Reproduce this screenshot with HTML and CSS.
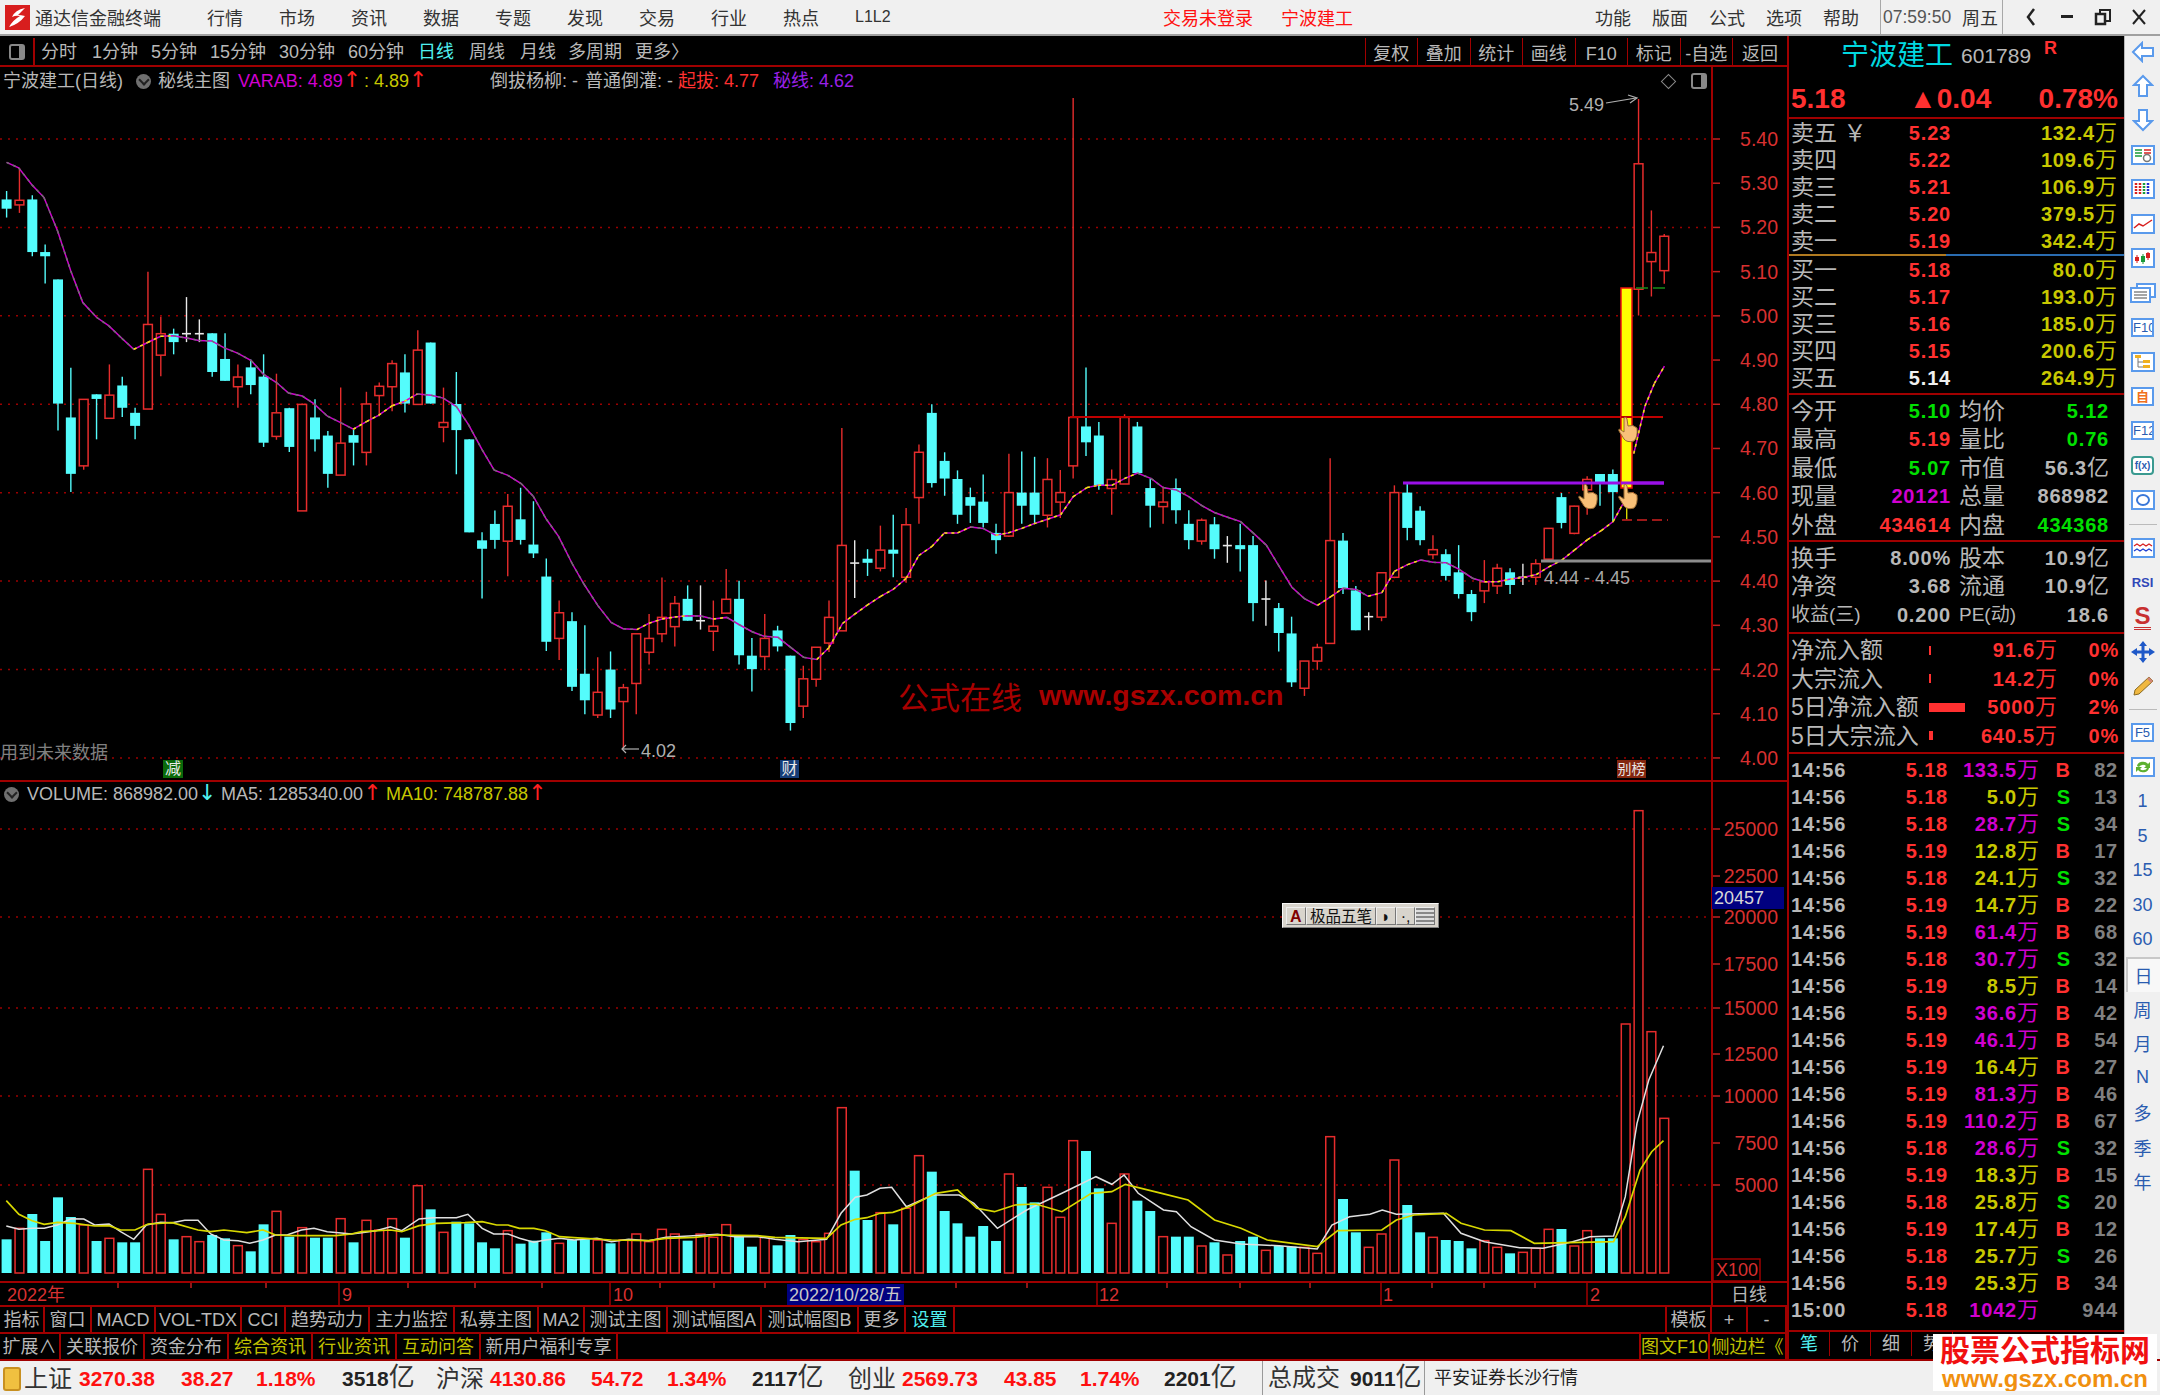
FILE: index.html
```html
<!DOCTYPE html>
<html>
<head>
  <meta charset="utf-8">
  <title>通达信金融终端</title>
  <link rel="stylesheet" href="styles.css">
</head>
<body>
  <div class="titlebar">
    <svg class="logo" viewBox="0 0 25 25"><rect width="25" height="25" fill="#d81e1e"/><path d="M20 3 Q10 5 7 12 Q11 10 15 11 Q8 15 4 22 Q14 19 20 11 Q16 10 13 10 Z" fill="#fff"/></svg>
    <div class="app-name">通达信金融终端</div>
    <div class="menu">行情</div><div class="menu">市场</div><div class="menu">资讯</div><div class="menu">数据</div><div class="menu">专题</div>
    <div class="menu">发现</div><div class="menu">交易</div><div class="menu">行业</div><div class="menu">热点</div><div class="menu menu-small">L1L2</div>
    <div class="trade-status">交易未登录</div>
    <div class="trade-stock">宁波建工</div>
    <div class="menu-right first">功能</div><div class="menu-right">版面</div><div class="menu-right">公式</div><div class="menu-right">选项</div><div class="menu-right">帮助</div>
    <div class="clock"><span class="clock-time">07:59:50</span><span>周五</span></div>
    <div class="win-btn"><svg width="12" height="20" viewBox="0 0 12 20"><path d="M9 2 L3 10 L9 18" fill="none" stroke="#222" stroke-width="2.5"/></svg></div>
    <div class="win-btn"><svg width="12" height="4" viewBox="0 0 12 4"><rect width="12" height="3" fill="#222"/></svg></div>
    <div class="win-btn"><svg width="18" height="18" viewBox="0 0 18 18"><rect x="6" y="2" width="10" height="11" fill="none" stroke="#222" stroke-width="2"/><rect x="2" y="6" width="9" height="10" fill="#f0f0f0" stroke="#222" stroke-width="2.5"/></svg></div>
    <div class="win-btn"><svg width="16" height="18" viewBox="0 0 16 18"><path d="M2 2 L14 16 M14 2 L2 16" stroke="#222" stroke-width="2"/></svg></div>
  </div>

  <div class="workspace">
    <div class="main">
      <div class="period-bar">
        <div class="period-toggle"><span class="mini-box"></span></div>
        <div></div>
        <div>分时</div><div>1分钟</div><div>5分钟</div><div>15分钟</div><div>30分钟</div><div>60分钟</div>
        <div class="on">日线</div><div>周线</div><div>月线</div><div>多周期</div><div>更多〉</div>
        <div class="tools">
          <div>复权</div><div>叠加</div><div>统计</div><div>画线</div><div>F10</div><div>标记</div><div>-自选</div><div>返回</div>
        </div>
      </div>

      <div class="chart-area">
        <svg id="chart" class="chart-svg" viewBox="0 67 1787 1238"></svg>

        <div class="pane-head price-head">
          <span class="head-title">宁波建工(日线)</span>
          <span class="ring"></span>
          <span class="head-main">秘线主图</span>
          <span class="magenta head-var">VARAB: 4.89<i class="up">↑</i></span>
          <span class="yellow">: 4.89<i class="up">↑</i></span>
          <span class="head-a">倒拔杨柳: -</span>
          <span class="head-b">普通倒灌: -</span>
          <span class="red head-c">起拔: 4.77</span>
          <span class="purple head-d">秘线: 4.62</span>
        </div>

        <div class="pane-head volume-head">
          <span class="ring"></span>
          <span class="vol-a">VOLUME: 868982.00<i class="down">↓</i></span>
          <span class="vol-b">MA5: 1285340.00<i class="up">↑</i></span>
          <span class="yellow vol-c">MA10: 748787.88<i class="up">↑</i></span>
        </div>

        <div class="badge badge-jian">减</div>
        <div class="badge badge-cai">财</div>
        <div class="badge badge-bang">别榜</div>
        <div class="future-note">用到未来数据</div>
        <div class="site-mark"><span class="site-cn">公式在线</span><span class="site-url">www.gszx.com.cn</span></div>
        <div class="corner-tools"><span class="diamond"></span><span class="mini-box"></span></div>

        <div class="ime">
          <span class="ime-a">A</span><span class="ime-name">极品五笔</span>
          <span class="ime-btn">◗</span><span class="ime-btn">·,</span><span class="ime-btn ime-keys"></span>
        </div>
      </div>

      <div class="tab-row tab-row-a">
        <div>指标</div><div>窗口</div><div>MACD</div><div>VOL-TDX</div><div>CCI</div><div>趋势动力</div><div>主力监控</div><div>私募主图</div><div>MA2</div>
        <div>测试主图</div><div>测试幅图A</div><div>测试幅图B</div><div>更多</div><div class="on">设置</div>
        <div class="blank"></div><div class="left-line">模板</div><div>+</div><div>-</div>
      </div>
      <div class="tab-row tab-row-b">
        <div>扩展∧</div><div>关联报价</div><div>资金分布</div><div class="olive">综合资讯</div><div class="olive">行业资讯</div><div class="olive">互动问答</div><div>新用户福利专享</div>
        <div class="blank"></div><div class="olive left-line">图文F10</div><div class="olive">侧边栏《</div>
      </div>
    </div>

    <div class="quote">
      <div class="name-row"><span class="stock-name">宁波建工</span><span class="stock-code">601789</span><span class="stock-flag">R</span></div>
      <div class="price-row"><span>5.18</span><span>▲0.04</span><span>0.78%</span></div>

      <div class="book">
        <div class="book-row"><span class="lbl">卖五 ￥</span><b class="red">5.23</b><b class="yellow">132.4<em>万</em></b></div>
        <div class="book-row"><span class="lbl">卖四</span><b class="red">5.22</b><b class="yellow">109.6<em>万</em></b></div>
        <div class="book-row"><span class="lbl">卖三</span><b class="red">5.21</b><b class="yellow">106.9<em>万</em></b></div>
        <div class="book-row"><span class="lbl">卖二</span><b class="red">5.20</b><b class="yellow">379.5<em>万</em></b></div>
        <div class="book-row"><span class="lbl">卖一</span><b class="red">5.19</b><b class="yellow">342.4<em>万</em></b></div>
      </div>
      <div class="book-split"></div>
      <div class="book">
        <div class="book-row"><span class="lbl">买一</span><b class="red">5.18</b><b class="yellow">80.0<em>万</em></b></div>
        <div class="book-row"><span class="lbl">买二</span><b class="red">5.17</b><b class="yellow">193.0<em>万</em></b></div>
        <div class="book-row"><span class="lbl">买三</span><b class="red">5.16</b><b class="yellow">185.0<em>万</em></b></div>
        <div class="book-row"><span class="lbl">买四</span><b class="red">5.15</b><b class="yellow">200.6<em>万</em></b></div>
        <div class="book-row"><span class="lbl">买五</span><b class="white">5.14</b><b class="yellow">264.9<em>万</em></b></div>
      </div>

      <div class="stats stats-a">
        <div class="stat-row"><span class="lbl">今开</span><b class="green">5.10</b><span class="lbl">均价</span><b class="green">5.12</b></div>
        <div class="stat-row"><span class="lbl">最高</span><b class="red">5.19</b><span class="lbl">量比</span><b class="green">0.76</b></div>
        <div class="stat-row"><span class="lbl">最低</span><b class="green">5.07</b><span class="lbl">市值</span><b class="gray">56.3<em>亿</em></b></div>
        <div class="stat-row"><span class="lbl">现量</span><b class="magenta">20121</b><span class="lbl">总量</span><b class="gray">868982</b></div>
        <div class="stat-row"><span class="lbl">外盘</span><b class="red">434614</b><span class="lbl">内盘</span><b class="green">434368</b></div>
      </div>
      <div class="stats stats-b">
        <div class="stat-row"><span class="lbl">换手</span><b class="gray">8.00%</b><span class="lbl">股本</span><b class="gray">10.9<em>亿</em></b></div>
        <div class="stat-row"><span class="lbl">净资</span><b class="gray">3.68</b><span class="lbl">流通</span><b class="gray">10.9<em>亿</em></b></div>
        <div class="stat-row"><span class="lbl wide">收益(三)</span><b class="gray">0.200</b><span class="lbl wide">PE(动)</span><b class="gray">18.6</b></div>
      </div>
      <div class="flows">
        <div class="flow-row"><span class="lbl">净流入额</span><span class="flow-bar" style="width:2px"></span><b class="red">91.6<em>万</em></b><b class="red">0%</b></div>
        <div class="flow-row"><span class="lbl">大宗流入</span><span class="flow-bar" style="width:2px"></span><b class="red">14.2<em>万</em></b><b class="red">0%</b></div>
        <div class="flow-row"><span class="lbl">5日净流入额</span><span class="flow-bar" style="width:36px"></span><b class="red">5000<em>万</em></b><b class="red">2%</b></div>
        <div class="flow-row"><span class="lbl">5日大宗流入</span><span class="flow-bar" style="width:4px"></span><b class="red">640.5<em>万</em></b><b class="red">0%</b></div>
      </div>
      <div id="trades" class="trades"></div>
      <div class="quote-tabs"><div class="on">笔</div><div>价</div><div>细</div><div>势</div></div>
    </div>

    <div class="sidebar">
      <div class="side-item side-first"><svg width="24" height="22" viewBox="0 0 24 22"><path d="M2 11 L11 2 V7 H22 V15 H11 V20 Z" class="ico-line"/></svg></div>
      <div class="side-item"><svg width="22" height="24" viewBox="0 0 22 24"><path d="M11 2 L20 11 H15 V22 H7 V11 H2 Z" class="ico-line"/></svg></div>
      <div class="side-item"><svg width="22" height="24" viewBox="0 0 22 24"><path d="M11 22 L20 13 H15 V2 H7 V13 H2 Z" class="ico-line"/></svg></div>
      <div class="side-item"><svg width="24" height="20" viewBox="0 0 24 20"><rect x="1" y="1" width="22" height="18" class="ico-box"/><path d="M4 5h7M4 8h7M4 11h7" stroke="#1a9a3a" stroke-width="1.5"/><path d="M13 5h7M13 8h7" stroke="#d82020" stroke-width="1.5"/><circle cx="16" cy="13" r="3.5" fill="none" stroke="#777" stroke-width="1.5"/></svg></div>
      <div class="side-item"><svg width="24" height="20" viewBox="0 0 24 20"><rect x="1" y="1" width="22" height="18" class="ico-box"/><path d="M5 4v12M9 4v12" stroke="#d82020" stroke-width="2.5" stroke-dasharray="2 1"/><path d="M13 4v12" stroke="#1a9a3a" stroke-width="2.5" stroke-dasharray="2 1"/><path d="M17 4v12" stroke="#2030d0" stroke-width="2.5" stroke-dasharray="2 1"/></svg></div>
      <div class="side-item"><svg width="24" height="20" viewBox="0 0 24 20"><rect x="1" y="1" width="22" height="18" class="ico-box"/><path d="M3 14 L8 10 L12 12 L21 6" fill="none" stroke="#d82020" stroke-width="1.5"/></svg></div>
      <div class="side-item"><svg width="24" height="20" viewBox="0 0 24 20"><rect x="1" y="1" width="22" height="18" class="ico-box"/><path d="M6 7v8M17 4v8" stroke="#d82020"/><rect x="4" y="9" width="4" height="4" fill="#d82020"/><rect x="15" y="5" width="4" height="5" fill="#d82020"/><path d="M12 6v10" stroke="#1a9a3a"/><rect x="10" y="8" width="4" height="6" fill="#1a9a3a"/></svg></div>
      <div class="side-item"><svg width="26" height="20" viewBox="0 0 26 20"><rect x="7" y="1" width="18" height="13" class="ico-box"/><rect x="1" y="5" width="19" height="14" class="ico-box"/><path d="M4 9h13M4 12h13M4 15h13" stroke="#888" stroke-width="1.5"/></svg></div>
      <div class="side-item"><span class="ico-text">F10</span></div>
      <div class="side-item"><svg width="24" height="20" viewBox="0 0 24 20"><rect x="1" y="1" width="22" height="18" class="ico-box"/><path d="M7 6v9h5M7 10h5" fill="none" stroke="#777"/><rect x="4" y="3" width="6" height="3" fill="#f0b020"/><rect x="12" y="8" width="7" height="3" fill="#f0b020"/><rect x="12" y="13" width="7" height="3" fill="#f0b020"/></svg></div>
      <div class="side-item"><span class="ico-text ico-orange">自</span></div>
      <div class="side-item"><span class="ico-text">F12</span></div>
      <div class="side-item"><span class="ico-text ico-teal"><i>f</i>(x)</span></div>
      <div class="side-item"><svg width="24" height="20" viewBox="0 0 24 20"><rect x="1" y="1" width="22" height="18" class="ico-box"/><ellipse cx="12" cy="10" rx="6" ry="5" fill="none" stroke="#3a78d8" stroke-width="2"/></svg></div>
      <div class="side-sep side-sep-a"></div>
      <div class="side-item"><svg width="24" height="20" viewBox="0 0 24 20"><rect x="1" y="1" width="22" height="18" class="ico-box"/><path d="M3 8 L6 6 L9 8 L12 6 L15 8 L18 6 L21 8" fill="none" stroke="#d82020" stroke-width="1.3"/><path d="M3 13 L6 11 L9 13 L12 11 L15 13 L18 11 L21 13" fill="none" stroke="#2040d0" stroke-width="1.3"/></svg></div>
      <div class="side-item"><span class="ico-rsi">RSI</span></div>
      <div class="side-item"><span class="ico-s">S</span></div>
      <div class="side-item"><svg width="26" height="24" viewBox="0 0 26 24"><path d="M13 1 L17 6 H14.5 V10.5 H19 V8 L25 12 L19 16 V13.5 H14.5 V18 H17 L13 23 L9 18 H11.5 V13.5 H7 V16 L1 12 L7 8 V10.5 H11.5 V6 H9 Z" fill="#1e58c8"/></svg></div>
      <div class="side-item"><svg width="24" height="24" viewBox="0 0 24 24"><path d="M18 3 L22 7 L8 20 L3 21 L4 16 Z" fill="#f0b840" stroke="#8a6a20"/><path d="M18 3 L22 7 L20 9 L16 5 Z" fill="#d08878"/></svg></div>
      <div class="side-sep"></div>
      <div class="side-item"><span class="ico-text">F5</span></div>
      <div class="side-item"><svg width="24" height="20" viewBox="0 0 24 20"><rect x="1" y="1" width="22" height="18" class="ico-box"/><path d="M6 9 A6 5 0 0 1 17 7 L19 5 V11 H13 L15 9 A4 3 0 0 0 8 10 Z M18 11 A6 5 0 0 1 7 13 L5 15 V10 H11 L9 12 A4 3 0 0 0 16 11 Z" fill="#5cb030"/></svg></div>
      <div class="side-item side-txt">1</div><div class="side-item side-txt">5</div><div class="side-item side-txt">15</div><div class="side-item side-txt">30</div><div class="side-item side-txt">60</div>
      <div class="side-item side-txt side-on">日</div>
      <div class="side-item side-txt">周</div><div class="side-item side-txt">月</div><div class="side-item side-txt">N</div><div class="side-item side-txt">多</div><div class="side-item side-txt">季</div><div class="side-item side-txt">年</div>
    </div>
  </div>

  <div class="status">
    <div class="status-ico"><span></span></div>
    <div class="idx-name">上证</div><div class="up-num">3270.38</div><div class="up-num">38.27</div><div class="up-num">1.18%</div><div class="amt">3518<em>亿</em></div>
    <div class="idx-name">沪深</div><div class="up-num">4130.86</div><div class="up-num">54.72</div><div class="up-num">1.34%</div><div class="amt">2117<em>亿</em></div>
    <div class="idx-name">创业</div><div class="up-num">2569.73</div><div class="up-num">43.85</div><div class="up-num">1.74%</div><div class="amt">2201<em>亿</em></div>
    <div class="idx-name boxed">总成交</div><div class="amt">9011<em>亿</em></div>
    <div class="broker">平安证券长沙行情</div>
  </div>

  <div class="watermark">
    <div class="wm-cn">股票公式指标网</div>
    <div class="wm-url">www.gszx.com.cn</div>
  </div>

  <script src="script.js"></script>
</body>
</html>
```

FILE: styles.css
```css
* {
  box-sizing: border-box;
}
html, body {
  margin: 0;
  width: 2160px;
  height: 1395px;
  overflow: hidden;
}
body {
  position: relative;
  background-color: #000;
  color: #b8b8b8;
  font-family: "Liberation Sans", "Noto Sans CJK SC", sans-serif;
  display: flex;
  flex-direction: column;
}
em, i {
  font-style: normal;
}

.red { color: #ff3030; }
.green { color: #00e000; }
.yellow { color: #c8c800; }
.magenta { color: #d000d0; }
.purple { color: #9a20e8; }
.white { color: #f0f0f0; }
.gray { color: #b8b8b8; }

/* title bar */
.titlebar {
  height: 36px;
  flex: none;
  background-color: #f0f0f0;
  border-bottom: 2px solid #a0a0a0;
  display: flex;
  align-items: center;
  color: #333;
  font-size: 18px;
}
.logo {
  width: 25px;
  height: 25px;
  margin: 0 5px;
}
.app-name {
  width: 172px;
}
.menu {
  width: 72px;
}
.menu-small {
  font-size: 16px;
}
.trade-status {
  margin-left: 236px;
  width: 118px;
  color: #ff1010;
}
.trade-stock {
  width: 74px;
  color: #ff1010;
}
.menu-right {
  width: 57px;
}
.menu-right.first {
  margin-left: 240px;
}
.clock {
  width: 123px;
  height: 34px;
  padding-left: 2px;
  display: flex;
  align-items: center;
  border-left: 1px solid #a8a8a8;
  border-right: 1px solid #a8a8a8;
}
.clock-time {
  width: 79px;
  font-size: 17.5px;
  color: #555;
}
.win-btn {
  width: 36px;
  display: flex;
  justify-content: center;
  align-items: center;
}
.clock + .win-btn {
  margin-left: 10px;
}

/* main columns */
.workspace {
  height: 1323px;
  flex: none;
  display: flex;
}
.main {
  width: 1787px;
  flex: none;
  display: flex;
  flex-direction: column;
}
.period-bar {
  height: 31px;
  flex: none;
  border-bottom: 2px solid #a00000;
  display: grid;
  grid-template-columns: 35px 6px 51px 59px 59px 69px 69px 70px 51px 51px 48px 67px 60px 1fr;
  align-items: center;
  font-size: 18px;
  line-height: 32px;
}
.period-bar .on {
  color: #50f0f0;
}
.period-toggle {
  height: 29px;
  border-right: 2px solid #a00000;
  display: flex;
  align-items: center;
  justify-content: center;
}
.mini-box {
  display: inline-block;
  width: 16px;
  height: 16px;
  border: 2px solid #888;
  border-radius: 3px;
  border-right-width: 6px;
}
.tools {
  display: flex;
  justify-content: flex-end;
}
.tools div {
  width: 52.5px;
  height: 29px;
  border-left: 1px solid #a00000;
  text-align: center;
}
.tools div:last-child {
  width: 55px;
}

/* chart */
.chart-area {
  position: relative;
  height: 1238px;
  flex: none;
  overflow: hidden;
}
.chart-svg {
  display: block;
  width: 1787px;
  height: 1238px;
}
.chart-svg text {
  font-family: "Liberation Sans", "Noto Sans CJK SC", sans-serif;
}
.pane-head {
  position: absolute;
  left: 0;
  display: flex;
  align-items: center;
  height: 24px;
  font-size: 18px;
  line-height: 24px;
  white-space: nowrap;
}
.price-head {
  top: 2px;
}
.volume-head {
  top: 715px;
  left: 4px;
}
.ring {
  position: relative;
  display: inline-block;
  width: 15px;
  height: 15px;
  border-radius: 50%;
  background-color: #707070;
  flex: none;
}
.ring::after {
  content: "";
  position: absolute;
  left: 4px;
  top: 2px;
  width: 6px;
  height: 6px;
  border-right: 2px solid #222;
  border-bottom: 2px solid #222;
  transform: rotate(45deg);
}
.head-title {
  width: 136px;
  padding-left: 3px;
}
.head-main {
  margin: 0 7px;
  width: 73px;
}
.pane-head i {
  font-size: 22px;
  line-height: 20px;
  font-family: "DejaVu Sans", sans-serif;
}
.up { color: #ff2020; }
.down { color: #50f0f0; }
.head-var { width: 126px; }
.head-a { position: absolute; left: 490px; }
.head-b { position: absolute; left: 585px; }
.head-c { position: absolute; left: 678px; }
.head-d { position: absolute; left: 773px; }
.vol-a { margin-left: 8px; width: 194px; }
.vol-b { width: 165px; }
.badge {
  position: absolute;
  top: 693px;
  height: 18px;
  line-height: 18px;
  font-size: 16px;
  text-align: center;
  color: #e8e8e8;
  white-space: nowrap;
  overflow: hidden;
}
.badge-jian { left: 163px; width: 20px; background-color: #0a6a0a; }
.badge-cai { left: 780px; width: 19px; background-color: #143c78; }
.badge-bang { left: 1617px; width: 29px; font-size: 14px; background-color: #84260e; }
.future-note {
  position: absolute;
  left: 0;
  top: 671px;
  font-size: 18px;
  color: #808080;
}
.site-mark {
  position: absolute;
  left: 898px;
  top: 606px;
  color: #a80000;
  display: flex;
  align-items: center;
  white-space: nowrap;
}
.site-cn { font-size: 31px; width: 141px; }
.site-url { font-size: 28.5px; font-weight: bold; }
.corner-tools {
  position: absolute;
  left: 1661px;
  top: 4px;
  width: 46px;
  height: 20px;
  display: flex;
  align-items: center;
  justify-content: space-between;
}
.diamond {
  width: 11px;
  height: 11px;
  margin-left: 2px;
  border: 1px solid #888;
  transform: rotate(45deg);
}
.ime {
  position: absolute;
  left: 1282px;
  top: 836px;
  width: 157px;
  height: 25px;
  padding: 3px;
  background-color: #d8d4cc;
  border: 1px solid #f8f8f8;
  border-bottom-color: #808080;
  border-right-color: #808080;
  display: flex;
  align-items: center;
  color: #111;
  font-size: 16px;
}
.ime span {
  height: 18px;
  line-height: 18px;
  text-align: center;
  border: 1px solid #eee;
  border-right-color: #777;
  border-bottom-color: #777;
}
.ime-a { width: 20px; color: #800000; font-weight: bold; }
.ime-name { width: 72px; font-size: 15.5px; white-space: nowrap; }
.ime-btn { width: 20px; }
.ime-keys { background: repeating-linear-gradient(#888 0 2px, #ddd 2px 4px); }

/* tab rows */
.tab-row {
  display: grid;
  align-items: center;
  font-size: 18px;
  text-align: center;
  white-space: nowrap;
  border-top: 2px solid #a00000;
}
.tab-row > div {
  height: 100%;
  line-height: 26px;
  border-right: 2px solid #a00000;
}
.tab-row .blank {
  border-right: 0;
}
.tab-row .left-line {
  border-left: 2px solid #a00000;
}
.tab-row .on { color: #50f0f0; }
.tab-row .olive { color: #c0c000; }
.tab-row-a {
  height: 27px;
  grid-template-columns: 45px 47px 64px 86px 44px 84px 85px 84px 46px 83px 94px 97px 47px 49px 710px 47px 36px 39px;
}
.tab-row-b {
  height: 26px;
  grid-template-columns: 61px 84px 84px 84px 84px 84px 137px 1021px 71px 77px;
}

/* quote panel */
.quote {
  width: 337px;
  flex: none;
  border-left: 2px solid #a00000;
  display: flex;
  flex-direction: column;
}
.quote b {
  font-size: 20px;
  line-height: 24px;
  letter-spacing: 0.8px;
  text-align: right;
}
.quote b em {
  font-size: 22px;
  line-height: 20px;
  font-weight: normal;
  letter-spacing: 0;
}
.lbl {
  font-size: 23px;
  line-height: 26px;
  white-space: nowrap;
}
.name-row {
  height: 39px;
  flex: none;
  display: flex;
  align-items: center;
  padding-left: 52px;
}
.stock-name {
  font-size: 28px;
  line-height: 36px;
  color: #00d8e0;
  width: 120px;
}
.stock-code {
  font-size: 21px;
  width: 83px;
}
.stock-flag {
  font-size: 18px;
  font-weight: bold;
  color: #ff3030;
  align-self: flex-start;
  margin-top: 2px;
}
.price-row {
  height: 44px;
  flex: none;
  padding: 6px 6px 0 2px;
  display: grid;
  grid-template-columns: 118px 1fr auto;
  align-items: center;
  color: #ff3030;
  font-size: 28px;
  font-weight: bold;
  border-bottom: 2px solid #a00000;
}
.book {
  flex: none;
  padding-left: 2px;
}
.book-row {
  height: 27px;
  display: grid;
  grid-template-columns: 90px 70px 166px;
  align-items: center;
}
.book-split {
  height: 2px;
  flex: none;
  background: linear-gradient(90deg, #b07a20 0 47%, #2a6cb0 47%);
}
.stats {
  flex: none;
  padding: 2px 0 0 2px;
  border-top: 2px solid #a00000;
}
.stats-a {
  height: 147px;
  margin-top: 2px;
}
.stats-b {
  height: 92px;
}
.stat-row {
  height: 28.5px;
  padding-bottom: 1px;
  display: grid;
  grid-template-columns: 60px 100px 60px 98px;
  align-items: center;
}
.stat-row .lbl:nth-child(3) {
  padding-left: 8px;
}
.stat-row .lbl.wide {
  font-size: 19px;
}
.flows {
  flex: none;
  height: 120px;
  padding: 2px 0 0 2px;
  border-top: 2px solid #a00000;
}
.flow-row {
  height: 28.5px;
  display: grid;
  grid-template-columns: 138px 40px 88px 62px;
  align-items: center;
}
.flow-bar {
  display: block;
  height: 9px;
  background-color: #ff3030;
}
.trades {
  flex: none;
  height: 578px;
  padding: 2px 0 0 2px;
  border-top: 2px solid #a00000;
}
.trade-row {
  height: 27px;
  display: grid;
  grid-template-columns: 51px 106px 91px 31px 48px;
  align-items: center;
}
.trade-row .cnt { color: #808080; }
.trade-row .side { letter-spacing: 0; }
.quote-tabs {
  flex: none;
  height: 26px;
  border-top: 2px solid #a00000;
  display: flex;
  font-size: 18px;
  line-height: 24px;
  text-align: center;
}
.quote-tabs div {
  width: 41px;
  border-right: 1px solid #a00000;
}
.quote-tabs .on { color: #50f0f0; }

/* right icon strip */
.sidebar {
  width: 36px;
  flex: none;
  height: 1323px;
  background-color: #f0f0f0;
  border-left: 1px solid #b8b8b8;
  display: flex;
  flex-direction: column;
  align-items: center;
}
.side-item {
  width: 34px;
  height: 34.5px;
  flex: none;
  display: flex;
  align-items: center;
  justify-content: center;
}
.side-first {
  height: 32.5px;
}
.side-sep {
  width: 28px;
  height: 12px;
  flex: none;
  background: linear-gradient(#bbb, #bbb) center / 100% 1px no-repeat;
}
.side-sep-a {
  height: 14px;
}
.ico-line {
  fill: #fff;
  stroke: #5a9aec;
  stroke-width: 2;
}
.ico-box {
  fill: #fff;
  stroke: #5a9aec;
  stroke-width: 2;
}
.ico-text {
  width: 23px;
  height: 19px;
  background-color: #fff;
  border: 2px solid #5a9aec;
  font-size: 13px;
  line-height: 15px;
  text-align: center;
  color: #2a5cb0;
  white-space: nowrap;
  overflow: hidden;
}
.ico-orange { color: #f07020; font-weight: bold; }
.ico-teal { border-color: #3a9a90; border-radius: 4px; font-size: 10px; font-weight: bold; }
.ico-rsi {
  font-size: 13px;
  font-weight: bold;
  color: #3048b8;
}
.ico-s {
  font-size: 24px;
  font-weight: bold;
  color: #c83030;
  border-bottom: 3px double #c83030;
  line-height: 22px;
}
.side-txt {
  font-size: 18px;
  color: #2a5cb0;
}
.side-on {
  background-color: #f8f8f8;
  border: 2px solid #c8c8c8;
  border-bottom: 0;
  border-right: 0;
}

/* bottom status bar */
.status {
  flex: 1;
  background-color: #f0f0f0;
  border-top: 2px solid #a00000;
  color: #222;
  display: grid;
  grid-template-columns: 24px 55px 102px 75px 86px 94px 54px 101px 76px 85px 96px 54px 102px 76px 84px 98px 88px 74px 1fr;
  align-items: center;
  white-space: nowrap;
}
.status-ico {
  display: flex;
  justify-content: center;
}
.status-ico span {
  width: 18px;
  height: 24px;
  background-color: #f0c040;
  border: 2px solid #c89020;
  border-radius: 3px;
}
.idx-name {
  font-size: 24px;
  line-height: 30px;
  color: #333;
}
.idx-name.boxed {
  height: 36px;
  line-height: 34px;
  padding-left: 5px;
  border-left: 1px solid #999;
}
.up-num {
  color: #ff1010;
  font-size: 21px;
  line-height: 30px;
  font-weight: bold;
}
.amt {
  font-size: 21px;
  line-height: 30px;
  font-weight: bold;
  color: #222;
}
.amt em {
  font-size: 26px;
  line-height: 20px;
  font-weight: normal;
  color: #333;
}
.broker {
  height: 36px;
  line-height: 34px;
  padding-left: 9px;
  border-left: 1px solid #999;
  font-size: 18px;
  color: #222;
}
.watermark {
  position: absolute;
  left: 1933px;
  top: 1334px;
  width: 224px;
  height: 57px;
  padding-top: 2px;
  background-color: #fff;
  text-align: center;
  line-height: 1;
  overflow: hidden;
}
.wm-cn {
  color: #f01010;
  font-size: 30px;
  font-weight: bold;
  height: 31px;
}
.wm-url {
  color: #f09010;
  font-size: 24px;
  font-weight: bold;
}
```

FILE: script.js
```js
// chart data, traced in pixels: [type, high, bodyTop, bodyBottom, low]
// c = falling (filled), r = rising (hollow), w = doji
const CANDLES_A = [
  ['c',145,165,187,208],['r',90,167,178,197],['c',155,165,290,300],['c',272,290,300,365],['c',355,355,650,714],
  ['c',565,683,817,860],['r',640,640,798,807],['c',628,628,639,735],['r',557,630,685,685],['c',586,607,660,682],
  ['c',660,672,703,735],['r',337,462,663,663],['r',444,484,535,585],['c',472,484,504,533],['w',397,484,486,504],
  ['w',450,484,486,504],['c',483,483,575,586],['c',483,544,596,596],['r',557,587,610,660],['c',545,564,606,628],
  ['c',533,586,743,753],['r',579,672,728,736],['c',660,661,753,765],['r',650,652,905,905],['c',640,683,735,764],
  ['c',715,726,817,850],['r',612,744,820,820],['c',712,725,743,797],['r',622,651,766,797],['r',600,609,631,680],
  ['r',547,555,610,668],['c',533,576,650,671],['r',476,523,652,652],['c',505,505,650,650],['r',612,695,706,742],
  ['c',575,651,713,818],['c',735,735,956,956],['c',956,975,995,1113],['c',904,936,974,995],['r',865,894,977,1060],
  ['c',850,925,974,985],['c',882,985,1006,1017],['c',1018,1061,1216,1238],['r',1118,1147,1208,1259],['c',1146,1167,1323,1333],
  ['c',1177,1292,1355,1388],['r',1253,1336,1390,1397],['c',1239,1282,1377,1397],['r',1316,1325,1358,1470],['r',1197,1197,1315,1388],
  ['r',1150,1208,1241,1270],['r',1063,1158,1197,1217],['r',1107,1125,1180,1227],['c',1082,1114,1166,1166],['w',1082,1166,1168,1187],
  ['r',1118,1179,1191,1238],['r',1043,1115,1148,1148],['c',1071,1114,1248,1270],['c',1207,1249,1281,1334],['r',1150,1208,1251,1283],
  ['c',1178,1189,1227,1239],['c',1249,1249,1409,1427],['r',1273,1304,1369,1397],['r',1229,1229,1305,1323],['r',1118,1158,1219,1240],
  ['r',708,987,1190,1190],['w',975,1029,1031,1112]
];
const CANDLES_B = [
  ['c',1036,1057,1066,1095],['r',984,1038,1078,1085],['c',960,1037,1046,1098],['r',945,982,1098,1110],['r',805,822,922,980],
  ['c',716,735,890,900],['c',822,841,880,918],['c',862,881,960,980],['c',900,921,940,978],['c',871,931,978,988],
  ['c',980,1000,1016,1046],['r',825,911,1007,1009],['c',820,911,940,980],['c',832,911,960,980],['r',835,882,961,988],
  ['r',861,911,932,967],['r',40,745,852,880],['c',635,765,800,830],['c',755,785,895,905],['r',860,882,902,960],
  ['r',738,745,892,892],['c',755,765,868,870],['c',880,901,940,988],['r',898,932,942,980],['c',880,901,950,980],
  ['c',950,980,1016,1036],['r',968,972,1018,1026],['c',965,981,1036,1057],['w',1007,1028,1030,1066],['c',980,1027,1036,1085],
  ['c',1007,1027,1155,1195],['w',1105,1146,1148,1205],['c',1155,1166,1221,1262],['c',1185,1222,1330,1340],['r',1283,1283,1343,1360],
  ['r',1245,1253,1283,1302],['r',835,1017,1244,1244],['c',1000,1017,1122,1135],['c',1117,1127,1215,1215],['w',1175,1185,1187,1215],
  ['r',1088,1088,1186,1195],['r',895,911,1098,1100],['c',891,911,989,1016],['c',941,951,1016,1027],['r',1005,1037,1048,1058],
  ['c',1036,1047,1095,1105],['c',1027,1087,1135,1145],['c',1126,1135,1175,1195],['r',1060,1108,1128,1155],['r',1068,1078,1117,1135],
  ['c',1078,1087,1115,1135],['w',1068,1098,1100,1115],['r',1058,1068,1098,1115],['r',990,990,1058,1060],['c',912,921,978,990],
  ['r',940,941,1001,1003],['r',875,882,905,960],['c',870,870,888,940],['c',860,870,910,975],['y',460,460,905,970],
  ['r',42,185,462,520],['r',288,381,401,478],['r',340,345,421,450]
];
const MA_A = [[12,77],[34,90],[58,130],[80,160],[105,240],[129,335],[151,410],[176,445],[198,465],[222,495],[244,521],[269,505],[293,490],[316,489],[340,494],[362,500],[386,501],[408,517],[433,530],[458,548],[480,580],[504,600],[526,625],[551,632],[572,650],[597,680],[622,696],[644,711],[668,693],[690,678],[715,655],[737,645],[761,627],[786,630],[808,637],[832,657],[854,700],[879,760],[901,808],[925,820],[950,840],[972,870],[996,925],[1018,965],[1043,1030],[1065,1080],[1090,1130],[1114,1170],[1136,1185],[1161,1187],[1183,1172],[1207,1162],[1230,1157],[1254,1154],[1278,1155],[1300,1162],[1325,1158],[1347,1175],[1371,1192],[1393,1203],[1418,1205],[1442,1230],[1465,1253],[1489,1258],[1511,1230]];
const MA_B = [[36,1200],[55,1180],[75,1160],[97,1140],[117,1125],[138,1100],[158,1050],[179,1030],[199,1000],[220,1000],[241,987],[261,990],[281,1005],[301,1000],[323,990],[342,980],[364,970],[385,960],[405,920],[427,900],[445,895],[467,895],[487,880],[508,868],[530,880],[549,900],[570,905],[590,920],[611,940],[631,955],[651,965],[673,975],[693,1000],[714,1027],[733,1070],[755,1120],[775,1145],[796,1160],[818,1140],[837,1122],[858,1125],[877,1140],[899,1132],[919,1085],[940,1070],[961,1060],[981,1065],[1002,1066],[1022,1080],[1044,1100],[1063,1108],[1084,1108],[1105,1102],[1126,1098],[1146,1092],[1166,1075],[1187,1060],[1207,1038],[1228,1015],[1250,995],[1269,975],[1285,935]];
const MA_C = [[1302,825],[1320,720],[1335,670],[1351,632]];

const VOLS = 'c1378 r1345 c1302 c1383 c1252 c1311 r1335 c1383 r1375 c1387 c1387 r1168 r1303 c1378 r1370 r1385 c1365 c1375 r1397 c1414 c1333 r1294 c1370 r1343 c1373 c1373 r1316 c1387 r1321 r1350 r1316 c1373 r1217 c1288 r1357 c1325 c1330 c1387 c1405 r1352 c1391 c1382 c1357 r1390 c1380 c1378 r1380 c1390 r1380 r1362 r1385 r1348 r1362 c1382 r1362 r1372 r1334 c1366 c1400 r1372 c1396 c1365 r1378 r1385 r1360 r983 c1172 c1320 r1298 c1333 r1285 r1127 c1175 c1293 c1330 c1370 c1338 c1383 r1182 c1221 c1267 r1222 r1312 r1082 c1113 c1225 r1330 r1182 c1262 c1293 r1370 c1370 c1370 r1398 c1387 r1425 c1383 c1370 r1411 c1398 c1400 r1402 r1420 r1070 c1257 c1357 r1402 r1362 r1140 c1275 c1357 r1372 c1380 c1383 c1405 r1382 r1402 c1420 r1417 r1405 r1348 c1347 r1398 r1352 c1375 c1375 r732 r92 r755 r1015'.split(' ');

const M5_A = [[11,1338],[33,1348],[56,1345],[77,1345],[100,1335],[124,1316],[146,1317],[165,1335],[190,1332],[210,1355],[233,1378],[255,1335],[280,1327],[300,1328],[322,1321],[345,1321],[367,1362],[390,1380],[415,1382],[435,1390],[458,1380],[480,1365],[500,1365],[525,1350],[547,1345],[570,1355],[590,1358],[612,1362],[630,1358],[655,1352],[680,1340],[700,1352],[730,1317],[755,1313],[795,1313],[815,1303],[840,1345],[860,1362],[885,1362],[905,1375],[930,1387],[950,1380],[975,1375],[1000,1380],[1040,1375],[1065,1385],[1095,1378],[1130,1382],[1160,1372],[1200,1368],[1250,1363],[1280,1370],[1320,1370],[1350,1378],[1390,1385],[1440,1378],[1465,1300],[1490,1252],[1510,1245]];
const M5_B = [[0,1225],[20,1222],[45,1280],[90,1245],[135,1245],[160,1270],[200,1345],[250,1290],[310,1240],[368,1190],[395,1213],[416,1185],[440,1240],[483,1290],[505,1295],[530,1340],[570,1380],[615,1392],[680,1397],[745,1407],[770,1335],[800,1310],[835,1303],[856,1290],[880,1303],[960,1300],[990,1360],[1030,1385],[1090,1403],[1130,1405],[1180,1385],[1210,1370],[1250,1368],[1270,1250],[1290,1030],[1310,900],[1335,797]];
const M10_A = [[11,1262],[33,1303],[56,1322],[77,1333],[100,1327],[130,1330],[165,1338],[190,1337],[210,1350],[235,1350],[258,1332],[300,1328],[345,1350],[367,1355],[390,1350],[430,1358],[458,1350],[480,1365],[510,1367],[585,1367],[612,1362],[630,1355],[680,1350],[700,1355],[730,1337],[760,1330],[810,1328],[840,1325],[865,1335],[885,1335],[905,1345],[930,1345],[950,1352],[975,1370],[1000,1373],[1065,1380],[1130,1382],[1160,1375],[1210,1372],[1250,1365],[1320,1367],[1350,1372],[1440,1375],[1465,1335],[1490,1318],[1510,1313]];
const M10_B = [[0,1300],[22,1297],[50,1280],[95,1240],[132,1230],[165,1285],[195,1295],[230,1275],[265,1272],[310,1295],[360,1240],[395,1235],[418,1213],[480,1240],[525,1260],[570,1320],[615,1345],[660,1380],[745,1400],[780,1352],[855,1350],[880,1320],[910,1305],[965,1300],[990,1330],[1030,1350],[1075,1352],[1115,1390],[1250,1385],[1270,1310],[1295,1170],[1315,1115],[1335,1082]];

const TRADES = [
  ['14:56','5.18','133.5','B',82],['14:56','5.18','5.0','S',13],['14:56','5.18','28.7','S',34],['14:56','5.19','12.8','B',17],
  ['14:56','5.18','24.1','S',32],['14:56','5.19','14.7','B',22],['14:56','5.19','61.4','B',68],['14:56','5.18','30.7','S',32],
  ['14:56','5.19','8.5','B',14],['14:56','5.19','36.6','B',42],['14:56','5.19','46.1','B',54],['14:56','5.19','16.4','B',27],
  ['14:56','5.19','81.3','B',46],['14:56','5.19','110.2','B',67],['14:56','5.18','28.6','S',32],['14:56','5.19','18.3','B',15],
  ['14:56','5.18','25.8','S',20],['14:56','5.19','17.4','B',12],['14:56','5.18','25.7','S',26],['14:56','5.19','25.3','B',34],
  ['15:00','5.18','1042','',944]
];

const RED = '#e62c2c';
const CYAN = '#54fcfc';
const LINE = '#a00000';
const GRID = '#9a0000';

const ax = v => v / 1.823;
const ay = v => 130 + v / 2.376;
const bx = v => 820 + v / 1.6;
const by = v => 80 + v / 2.208;
const vax = v => v / 1.742;
const vbx = v => 880 + v / 1.704;
const vy = v => 780 + v / 3;
const candleX = i => 6.6 + i * 12.85;

const parts = [];

function line(x1, y1, x2, y2, color, w, dash) {
  parts.push(`<line x1="${x1}" y1="${y1}" x2="${x2}" y2="${y2}" stroke="${color}" stroke-width="${w}"${dash ? ` stroke-dasharray="${dash}"` : ''}/>`);
}
function text(x, y, str, color, size, anchor) {
  parts.push(`<text x="${x}" y="${y}" fill="${color}" font-size="${size}" text-anchor="${anchor || 'start'}" dominant-baseline="central">${str}</text>`);
}
function poly(pts, color, w) {
  parts.push(`<polyline points="${pts.map(p => p[0].toFixed(1) + ',' + p[1].toFixed(1)).join(' ')}" fill="none" stroke="${color}" stroke-width="${w}"/>`);
}

// grids and axes
[4, 4.2, 4.4, 4.6, 4.8, 5, 5.2, 5.4].forEach(p => {
  const y = 139 + (5.4 - p) * 442.1;
  line(0, y, 1711, y, GRID, 1.5, '2 6');
});
for (let p = 4; p < 5.45; p += 0.1) {
  const y = 139 + (5.4 - p) * 442.1;
  line(1712, y, 1720, y, '#c02020', 1.5);
  text(1778, y, p.toFixed(2), '#d83030', 19.5, 'end');
}
[829, 917, 1008, 1096, 1185].forEach(y => line(0, y, 1711, y, GRID, 1.5, '2 6'));
[[25000, 829], [22500, 876], [20000, 917], [17500, 964], [15000, 1008], [12500, 1054], [10000, 1096], [7500, 1143], [5000, 1185]].forEach(a => {
  line(1712, a[1], 1720, a[1], '#c02020', 1.5);
  text(1778, a[1], a[0], '#d83030', 19.5, 'end');
});

// candles
function candle(c, i, ymap) {
  const x = candleX(i);
  const hi = ymap(c[1]), top = ymap(c[2]), bot = ymap(c[3]), lo = ymap(c[4]);
  if (c[0] === 'c') {
    line(x, hi, x, lo, CYAN, 1.4);
    parts.push(`<rect x="${x - 5}" y="${top}" width="10" height="${bot - top}" fill="${CYAN}"/>`);
  } else if (c[0] === 'w') {
    line(x, hi, x, lo, '#e8e8e8', 1.4);
    line(x - 4.5, top, x + 4.5, top, '#e8e8e8', 1.6);
  } else if (c[0] === 'y') {
    line(x + 1, bot, x + 1, lo, '#d8d800', 1.4);
  } else {
    line(x, hi, x, top, RED, 1.4);
    line(x, bot, x, lo, RED, 1.4);
    parts.push(`<rect x="${x - 4.4}" y="${top}" width="8.8" height="${bot - top}" fill="#000" stroke="${RED}" stroke-width="1.5"/>`);
  }
}
CANDLES_A.forEach((c, i) => candle(c, i, ay));
CANDLES_B.forEach((c, i) => candle(c, i + CANDLES_A.length, by));

// moving average: magenta with a gray or yellow dash over it
const maPts = MA_A.map(p => [ax(p[0]), ay(p[1])]).concat(MA_B.map(p => [bx(p[0]), by(p[1])]));
const maEnd = MA_C.map(p => [bx(p[0]), by(p[1])]);
function maLine(pts) {
  poly(pts, '#d000d0', 1.5);
  for (let i = 1; i < pts.length; i++) {
    const falling = pts[i][1] > pts[i - 1][1];
    line(pts[i - 1][0], pts[i - 1][1], pts[i][0], pts[i][1], falling ? '#707070' : '#f0f000', 1.5, '3 4');
  }
}
maLine(maPts);

// levels
line(1070, 417, 1663, 417, '#c00000', 2);
line(1403, 483, 1664, 483, '#9a10e8', 3);
line(1541, 561, 1711, 561, '#8c8c8c', 3);
line(1636, 288, 1668, 288, '#1a8a1a', 1.5, '12 5');
line(1622, 520, 1668, 520, '#d02020', 1.5, '10 5');

// yellow bar sits over the levels
parts.push(`<rect x="1621" y="288" width="11" height="200" fill="#ffff00" stroke="#f01010" stroke-width="1.5"/>`);
line(1621, 417, 1632, 417, '#c00000', 2);
line(1621, 483, 1664, 483, '#9a10e8', 3);
maLine(maEnd);
['M1588 497', 'M1628 430', 'M1628 497'].forEach(p => {
  const xy = p.slice(1).split(' ').map(Number);
  parts.push(`<g transform="translate(${xy[0] - 10} ${xy[1] - 13})"><path d="M6 1 Q8 -1 9 2 L10 9 Q15 7 19 11 Q20 20 16 24 Q9 26 6 22 L1 14 Q0 11 3 13 L6 15 Z" fill="#f8c078" stroke="#9a6a30" stroke-width="1"/></g>`);
});

// price annotations
text(1569, 105, '5.49', '#b0b0b0', 18);
poly([[1606, 103], [1636, 98]], '#b0b0b0', 1.2);
poly([[1628, 95], [1637, 98], [1630, 103]], '#b0b0b0', 1.2);
text(1544, 578, '4.44 - 4.45', '#a8a8a8', 18);
poly([[622, 749], [639, 749]], '#b0b0b0', 1.2);
poly([[626, 745], [622, 749], [626, 753]], '#b0b0b0', 1.2);
text(641, 751, '4.02', '#b0b0b0', 18);

// volume bars
VOLS.forEach((v, i) => {
  const x = candleX(i);
  const top = vy(Number(v.slice(1)));
  if (v[0] === 'c') {
    parts.push(`<rect x="${x - 5}" y="${top}" width="10" height="${1273 - top}" fill="${CYAN}"/>`);
  } else {
    parts.push(`<rect x="${x - 4.4}" y="${top}" width="8.8" height="${1273 - top}" fill="#000" stroke="${RED}" stroke-width="1.5"/>`);
  }
});
poly(M5_A.map(p => [vax(p[0]), vy(p[1])]).concat(M5_B.map(p => [vbx(p[0]), vy(p[1])])), '#e0e0e0', 1.5);
poly(M10_A.map(p => [vax(p[0]), vy(p[1])]).concat(M10_B.map(p => [vbx(p[0]), vy(p[1])])), '#d8d800', 1.7);

// frame lines
line(1712, 67, 1712, 1305, LINE, 2);
line(0, 781, 1787, 781, LINE, 2);
line(0, 1282, 1787, 1282, LINE, 2);
parts.push(`<rect x="1712" y="887" width="72" height="22" fill="#000080"/>`);
text(1714, 898, '20457', '#d8d8d8', 18);
parts.push(`<rect x="1713" y="1259" width="47" height="22" fill="none" stroke="${LINE}" stroke-width="1.5"/>`);
text(1716, 1270, 'X100', '#d83030', 18);

// date axis
[118, 191, 266, 408, 475, 542, 660, 714, 765, 956, 1027, 1167, 1240, 1310, 1432, 1484, 1535].forEach(x => line(x, 1283, x, 1288, '#c02020', 1.5));
[339, 610, 1097, 1381, 1587].forEach(x => line(x, 1283, x, 1305, LINE, 1.5));
parts.push(`<rect x="787" y="1284" width="117" height="21" fill="#000080"/>`);
text(789, 1295, '2022/10/28/五', '#c8c8c8', 18);
[[7, '2022年'], [342, '9'], [613, '10'], [1099, '12'], [1383, '1'], [1590, '2']].forEach(a => text(a[0], 1295, a[1], '#d83030', 18));
text(1731, 1295, '日线', '#b8b8b8', 18);

document.getElementById('chart').innerHTML = parts.join('');

// time and sales
document.getElementById('trades').innerHTML = TRADES.map(t => {
  const volColor = parseFloat(t[2]) >= 28 ? 'magenta' : 'yellow';
  const sideColor = t[3] === 'B' ? 'red' : 'green';
  return `<div class="trade-row"><b class="gray">${t[0]}</b><b class="red">${t[1]}</b><b class="${volColor}">${t[2]}<em>万</em></b><b class="${sideColor} side">${t[3]}</b><b class="cnt">${t[4]}</b></div>`;
}).join('');
```
